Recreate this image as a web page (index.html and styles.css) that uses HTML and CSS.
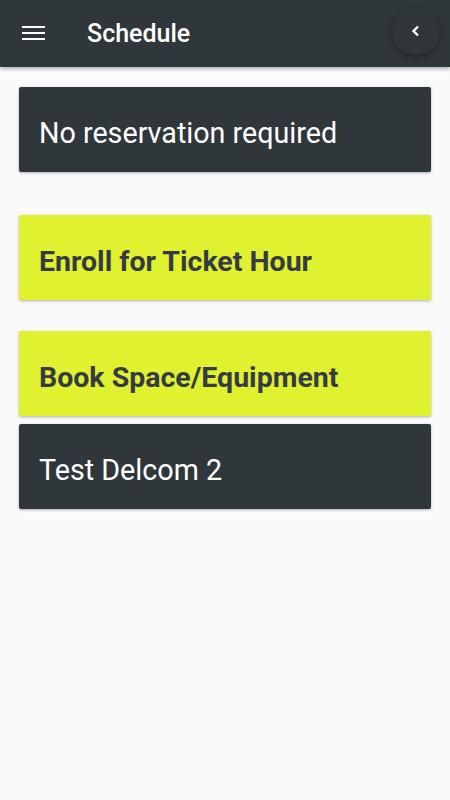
FILE: index.html
```html
<!DOCTYPE html>
<html lang="en">
<head>
    <meta charset="UTF-8">
    <meta name="viewport" content="width=device-width, initial-scale=1.0">
    <title>Schedule</title>
    <link rel="stylesheet" href="styles.css">
</head>
<body>
    <header class="topbar">
        <button class="menu-btn" aria-label="Menu">
            <span></span><span></span><span></span>
        </button>
        <h1>Schedule</h1>
        <button class="back-btn" aria-label="Back">
            <svg width="10" height="12" viewBox="0 0 10 12">
                <path d="M7 1.5 L2.5 6 L7 10.5" fill="none" stroke="#fff" stroke-width="2.4"/>
            </svg>
        </button>
    </header>

    <main class="list">
        <div class="card dark">No reservation required</div>
        <div class="card lime gap-lg">Enroll for Ticket Hour</div>
        <div class="card lime gap-md">Book Space/Equipment</div>
        <div class="card dark gap-sm">Test Delcom 2</div>
    </main>
</body>
</html>
```

FILE: styles.css
```css
body {
    font-family: 'Roboto', 'Liberation Sans', sans-serif;
    background-color: #fafafa;
    margin: 0;
    padding: 0;
}

.topbar {
    position: relative;
    height: 67px;
    background-color: #30373b;
    display: flex;
    align-items: center;
    box-shadow: 0 2px 4px rgba(0, 0, 0, 0.3);
}

.topbar h1 {
    margin: 0 0 0 41px;
    color: white;
    font-size: 25px;
    font-weight: 500;
}

.menu-btn {
    background: none;
    border: none;
    padding: 0;
    margin-left: 22px;
    width: 24px;
    display: flex;
    flex-direction: column;
    gap: 3.5px;
    margin-top: -1px;
}

.menu-btn span {
    display: block;
    height: 2.4px;
    width: 23px;
    background-color: white;
}

.back-btn {
    position: absolute;
    right: 10px;
    top: 7px;
    width: 48px;
    height: 48px;
    border-radius: 50%;
    border: none;
    background-color: #30373b;
    box-shadow: 0 2px 6px rgba(0, 0, 0, 0.35);
    display: flex;
    align-items: center;
    justify-content: center;
    padding: 0;
}

.list {
    display: flex;
    flex-direction: column;
    padding: 20px 19px;
}

.card {
    box-sizing: border-box;
    height: 85px;
    display: flex;
    align-items: center;
    padding: 7px 20px 0;
    border-radius: 2px;
    font-size: 28.7px;
    box-shadow: 0 1px 3px rgba(0, 0, 0, 0.3);
}

.card.dark {
    background-color: #30373b;
    color: white;
}

.card.lime {
    background-color: #dff12f;
    color: #353b45;
    font-weight: 700;
    font-size: 28.5px;
}

.gap-lg {
    margin-top: 43px;
}

.gap-md {
    margin-top: 31px;
}

.gap-sm {
    margin-top: 8px;
}
```
